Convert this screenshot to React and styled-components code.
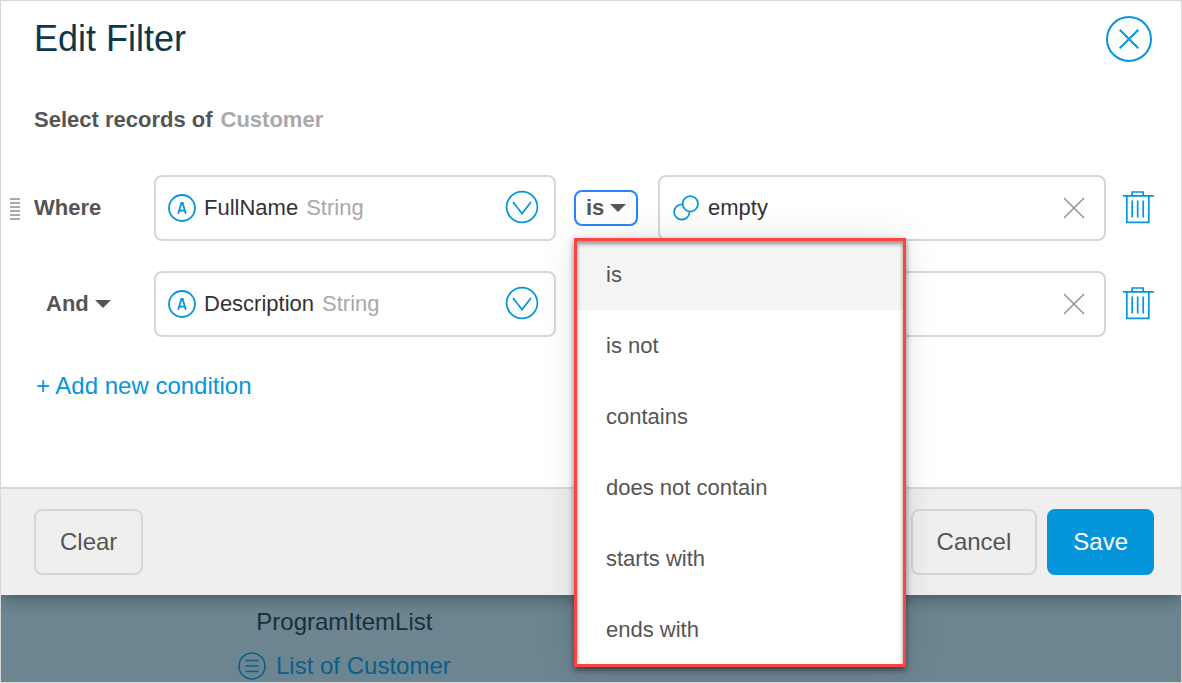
import React, { useState } from "react";
import styled, { createGlobalStyle } from "styled-components";

const blue = "#0595db";
const line = "#d7d7d7";
const ink = "#555555";
const muted = "#a9a9a9";

const GlobalStyle = createGlobalStyle`
  *, *::before, *::after { box-sizing: border-box; }
  body {
    margin: 0;
    font-family: "Liberation Sans", Arial, sans-serif;
    font-size: 22px;
    line-height: 26px;
    color: ${ink};
  }
  button, input, select { font: inherit; color: inherit; }
  button { cursor: pointer; }
`;

const Page = styled.div`
  display: flex;
  flex-direction: column;
  min-height: 100vh;
  border: 1px solid ${line};
  background: #6c8590;
  overflow: hidden;
`;

const Dialog = styled.section`
  position: relative;
  background: #fff;
  box-shadow: 0 2px 16px rgba(0, 0, 0, 0.4);
`;

const Header = styled.header`
  display: flex;
  justify-content: space-between;
  align-items: center;
  padding: 15px 29px 0 33px;
`;

const Title = styled.h1`
  margin: 0;
  font-size: 36px;
  font-weight: 400;
  line-height: 46px;
  color: #0f374a;
`;

const IconButton = styled.button`
  display: flex;
  flex: none;
  padding: 0;
  border: 0;
  background: none;
  color: ${(p) => p.$color || blue};
`;

const Body = styled.div`
  padding: 45px 27px 88px 9px;
`;

const Subtitle = styled.h2`
  display: flex;
  gap: 8px;
  margin: 0 0 42px 24px;
  font-size: 22px;
  font-weight: 700;
`;

const Muted = styled.span`
  color: ${muted};
`;

const Conditions = styled.div`
  display: grid;
  gap: 30px;
`;

const Condition = styled.div`
  display: grid;
  grid-template-columns: 126px minmax(0, 402fr) 66px minmax(0, 448fr) 30px;
  column-gap: 18px;
  align-items: center;
`;

const Lead = styled.div`
  display: flex;
  align-items: center;
  gap: 14px;
  padding-left: ${(p) => (p.$indent ? 36 : 0)}px;
  font-weight: 700;
`;

const Grip = styled.span`
  width: 10px;
  height: 22px;
  margin-top: 2px;
  background: repeating-linear-gradient(#a9a9a9 0 2px, transparent 2px 4px);
`;

const Joiner = styled.label`
  display: flex;
  align-items: center;
  gap: 6px;
`;

const JoinerSelect = styled.select`
  appearance: none;
  padding: 0;
  border: 0;
  background: none;
  font-weight: 700;
`;

const fieldBox = `
  display: flex;
  align-items: center;
  gap: 8px;
  width: 100%;
  height: 66px;
  border: 2px solid ${line};
  border-radius: 8px;
  background: #fff;
`;

const Field = styled.button`
  ${fieldBox}
  padding: 0 16px 0 12px;
  text-align: left;
  color: #333;
`;

const FieldType = styled(Muted)`
  flex: 1;
`;

const ValueField = styled.div`
  ${fieldBox}
  padding: 0 19px 0 12px;
`;

const ValueInput = styled.input`
  flex: 1;
  min-width: 0;
  padding: 0;
  border: 0;
  outline: 0;
  background: none;
  color: #333;
`;

const Operator = styled.div`
  position: relative;
  justify-self: start;
`;

const OperatorButton = styled.button`
  display: flex;
  align-items: center;
  gap: 6px;
  height: 36px;
  padding: 0 10px;
  border: 2px solid ${(p) => (p.$open ? "#2684ff" : "transparent")};
  border-radius: 8px;
  background: #fff;
  font-weight: 700;
`;

const Menu = styled.ul`
  position: absolute;
  z-index: 2;
  top: calc(100% + 13px);
  left: 1px;
  width: 330px;
  margin: 0;
  padding: 0 0 1px;
  list-style: none;
  background: #fff;
  box-shadow: 0 0 36px rgba(0, 0, 0, 0.1);

  &::after {
    content: "";
    position: absolute;
    inset: -1px;
    border: 3px solid #ff4343;
    box-shadow: 0 3px 6px rgba(0, 0, 0, 0.5), inset 0 3px 4px rgba(0, 0, 0, 0.4);
    pointer-events: none;
  }
`;

const MenuItem = styled.button`
  display: block;
  width: 100%;
  height: 71px;
  padding: 0 31px;
  border: 0;
  background: ${(p) => (p.$active ? "#f4f4f4" : "#fff")};
  text-align: left;
`;

const AddButton = styled.button`
  display: block;
  margin: 36px 0 0 26px;
  padding: 0;
  border: 0;
  background: none;
  font-size: 24px;
  color: ${blue};
`;

const Footer = styled.footer`
  display: flex;
  gap: 10px;
  padding: 20px 27px 20px 33px;
  border-top: 2px solid ${line};
  background: #efefef;
`;

const Spacer = styled.span`
  flex: 1;
`;

const ActionButton = styled.button`
  height: 66px;
  padding: 0 24px;
  border: 2px solid ${(p) => (p.$primary ? blue : line)};
  border-radius: 8px;
  background: ${(p) => (p.$primary ? blue : "transparent")};
  font-size: 24px;
  color: ${(p) => (p.$primary ? "#fff" : ink)};
`;

const Canvas = styled.main`
  display: flex;
  flex-direction: column;
  align-items: center;
  align-self: flex-start;
  gap: 16px;
  padding: 13px 0 2px 237px;
  font-size: 24px;
  line-height: 28px;
  color: #17303c;
`;

const EntityLink = styled.a`
  display: flex;
  align-items: center;
  gap: 10px;
  color: #0b5f8c;
  text-decoration: none;
`;

const Svg = styled.svg`
  display: block;
  flex: none;
  overflow: visible;
  fill: none;
  stroke: currentColor;
`;

const CloseIcon = () => (
  <Svg width="46" height="46" viewBox="0 0 46 46" strokeWidth="2">
    <circle cx="23" cy="23" r="22" />
    <path d="M13.7 13.7l18.6 18.6M32.3 13.7L13.7 32.3" />
  </Svg>
);

const StringIcon = () => (
  <Svg width="28" height="28" viewBox="0 0 28 28" color={blue} strokeWidth="1.8">
    <circle cx="14" cy="14" r="13" />
    <path d="M10.2 19.8L13.4 9h1.2l3.2 10.8M11.3 16.6h5.4" strokeWidth="1.8" />
  </Svg>
);

const ExpandIcon = () => (
  <Svg width="32" height="32" viewBox="0 0 32 32" color={blue} strokeWidth="1.7">
    <circle cx="16" cy="15" r="15.4" />
    <path d="M7 10l9 11.5 9-11.5" />
  </Svg>
);

const ExpressionIcon = () => (
  <Svg width="28" height="26" viewBox="0 0 28 26" color={blue} strokeWidth="1.7">
    <circle cx="9.8" cy="17" r="7.7" />
    <circle cx="18.3" cy="8.8" r="7.7" fill="#fff" />
  </Svg>
);

const ClearIcon = () => (
  <Svg width="22" height="22" viewBox="0 0 22 22" strokeWidth="1.4">
    <path d="M1 1l20 20M21 1L1 21" />
  </Svg>
);

const TrashIcon = () => (
  <Svg width="30" height="34" viewBox="0 0 30 34" strokeWidth="1.7">
    <path d="M-1 4.9h31M8.2 4.5V1h11v3.5M2.8 5v26.4h22V5" />
    <path d="M8.2 9.5v17M13.7 9.5v17M19.2 9.5v17" />
  </Svg>
);

const ListIcon = () => (
  <Svg width="28" height="28" viewBox="0 0 28 28" strokeWidth="1.5">
    <circle cx="14" cy="14" r="13" />
    <path d="M7.5 8.5h13M7.5 14h13M7.5 19.5h13" />
  </Svg>
);

const Caret = () => (
  <Svg width="16" height="8" viewBox="0 0 16 8" stroke="none">
    <path d="M0 0h16L8 8z" fill="currentColor" stroke="none" />
  </Svg>
);

const operators = ["is", "is not", "contains", "does not contain", "starts with", "ends with"];

function OperatorPicker({ initiallyOpen = false }) {
  const [open, setOpen] = useState(initiallyOpen);
  const [value, setValue] = useState("is");
  const choose = (name) => {
    setValue(name);
    setOpen(false);
  };
  return (
    <Operator>
      <OperatorButton $open={open} aria-expanded={open} onClick={() => setOpen(!open)}>
        {value}
        <Caret />
      </OperatorButton>
      {open && (
        <Menu aria-label="Operator">
          {operators.map((name) => (
            <li key={name}>
              <MenuItem $active={name === value} onClick={() => choose(name)}>
                {name}
              </MenuItem>
            </li>
          ))}
        </Menu>
      )}
    </Operator>
  );
}

function ConditionRow({ lead, indent, field, type, value, menuOpen }) {
  return (
    <Condition>
      <Lead $indent={indent}>{lead}</Lead>
      <Field>
        <StringIcon />
        <span>{field}</span>
        <FieldType>{type}</FieldType>
        <ExpandIcon />
      </Field>
      <OperatorPicker initiallyOpen={menuOpen} />
      <ValueField>
        <ExpressionIcon />
        <ValueInput aria-label={`${field} value`} defaultValue={value} />
        <IconButton $color="#8c8c8c" aria-label="Clear value">
          <ClearIcon />
        </IconButton>
      </ValueField>
      <IconButton aria-label="Delete condition">
        <TrashIcon />
      </IconButton>
    </Condition>
  );
}

export default function App() {
  return (
    <>
      <GlobalStyle />
      <Page>
        <Dialog role="dialog" aria-labelledby="dialog-title">
          <Header>
            <Title id="dialog-title">Edit Filter</Title>
            <IconButton aria-label="Close">
              <CloseIcon />
            </IconButton>
          </Header>
          <Body>
            <Subtitle>
              <span>Select records of</span>
              <Muted>Customer</Muted>
            </Subtitle>
            <Conditions>
              <ConditionRow
                lead={
                  <>
                    <Grip />
                    <span>Where</span>
                  </>
                }
                field="FullName"
                type="String"
                value="empty"
                menuOpen
              />
              <ConditionRow
                indent
                lead={
                  <Joiner>
                    <JoinerSelect aria-label="Join with" defaultValue="And">
                      <option>And</option>
                      <option>Or</option>
                    </JoinerSelect>
                    <Caret />
                  </Joiner>
                }
                field="Description"
                type="String"
                value=""
              />
            </Conditions>
            <AddButton>+ Add new condition</AddButton>
          </Body>
          <Footer>
            <ActionButton>Clear</ActionButton>
            <Spacer />
            <ActionButton>Cancel</ActionButton>
            <ActionButton $primary>Save</ActionButton>
          </Footer>
        </Dialog>
        <Canvas>
          <span>ProgramItemList</span>
          <EntityLink href="#customers">
            <ListIcon />
            List of Customer
          </EntityLink>
        </Canvas>
      </Page>
    </>
  );
}
